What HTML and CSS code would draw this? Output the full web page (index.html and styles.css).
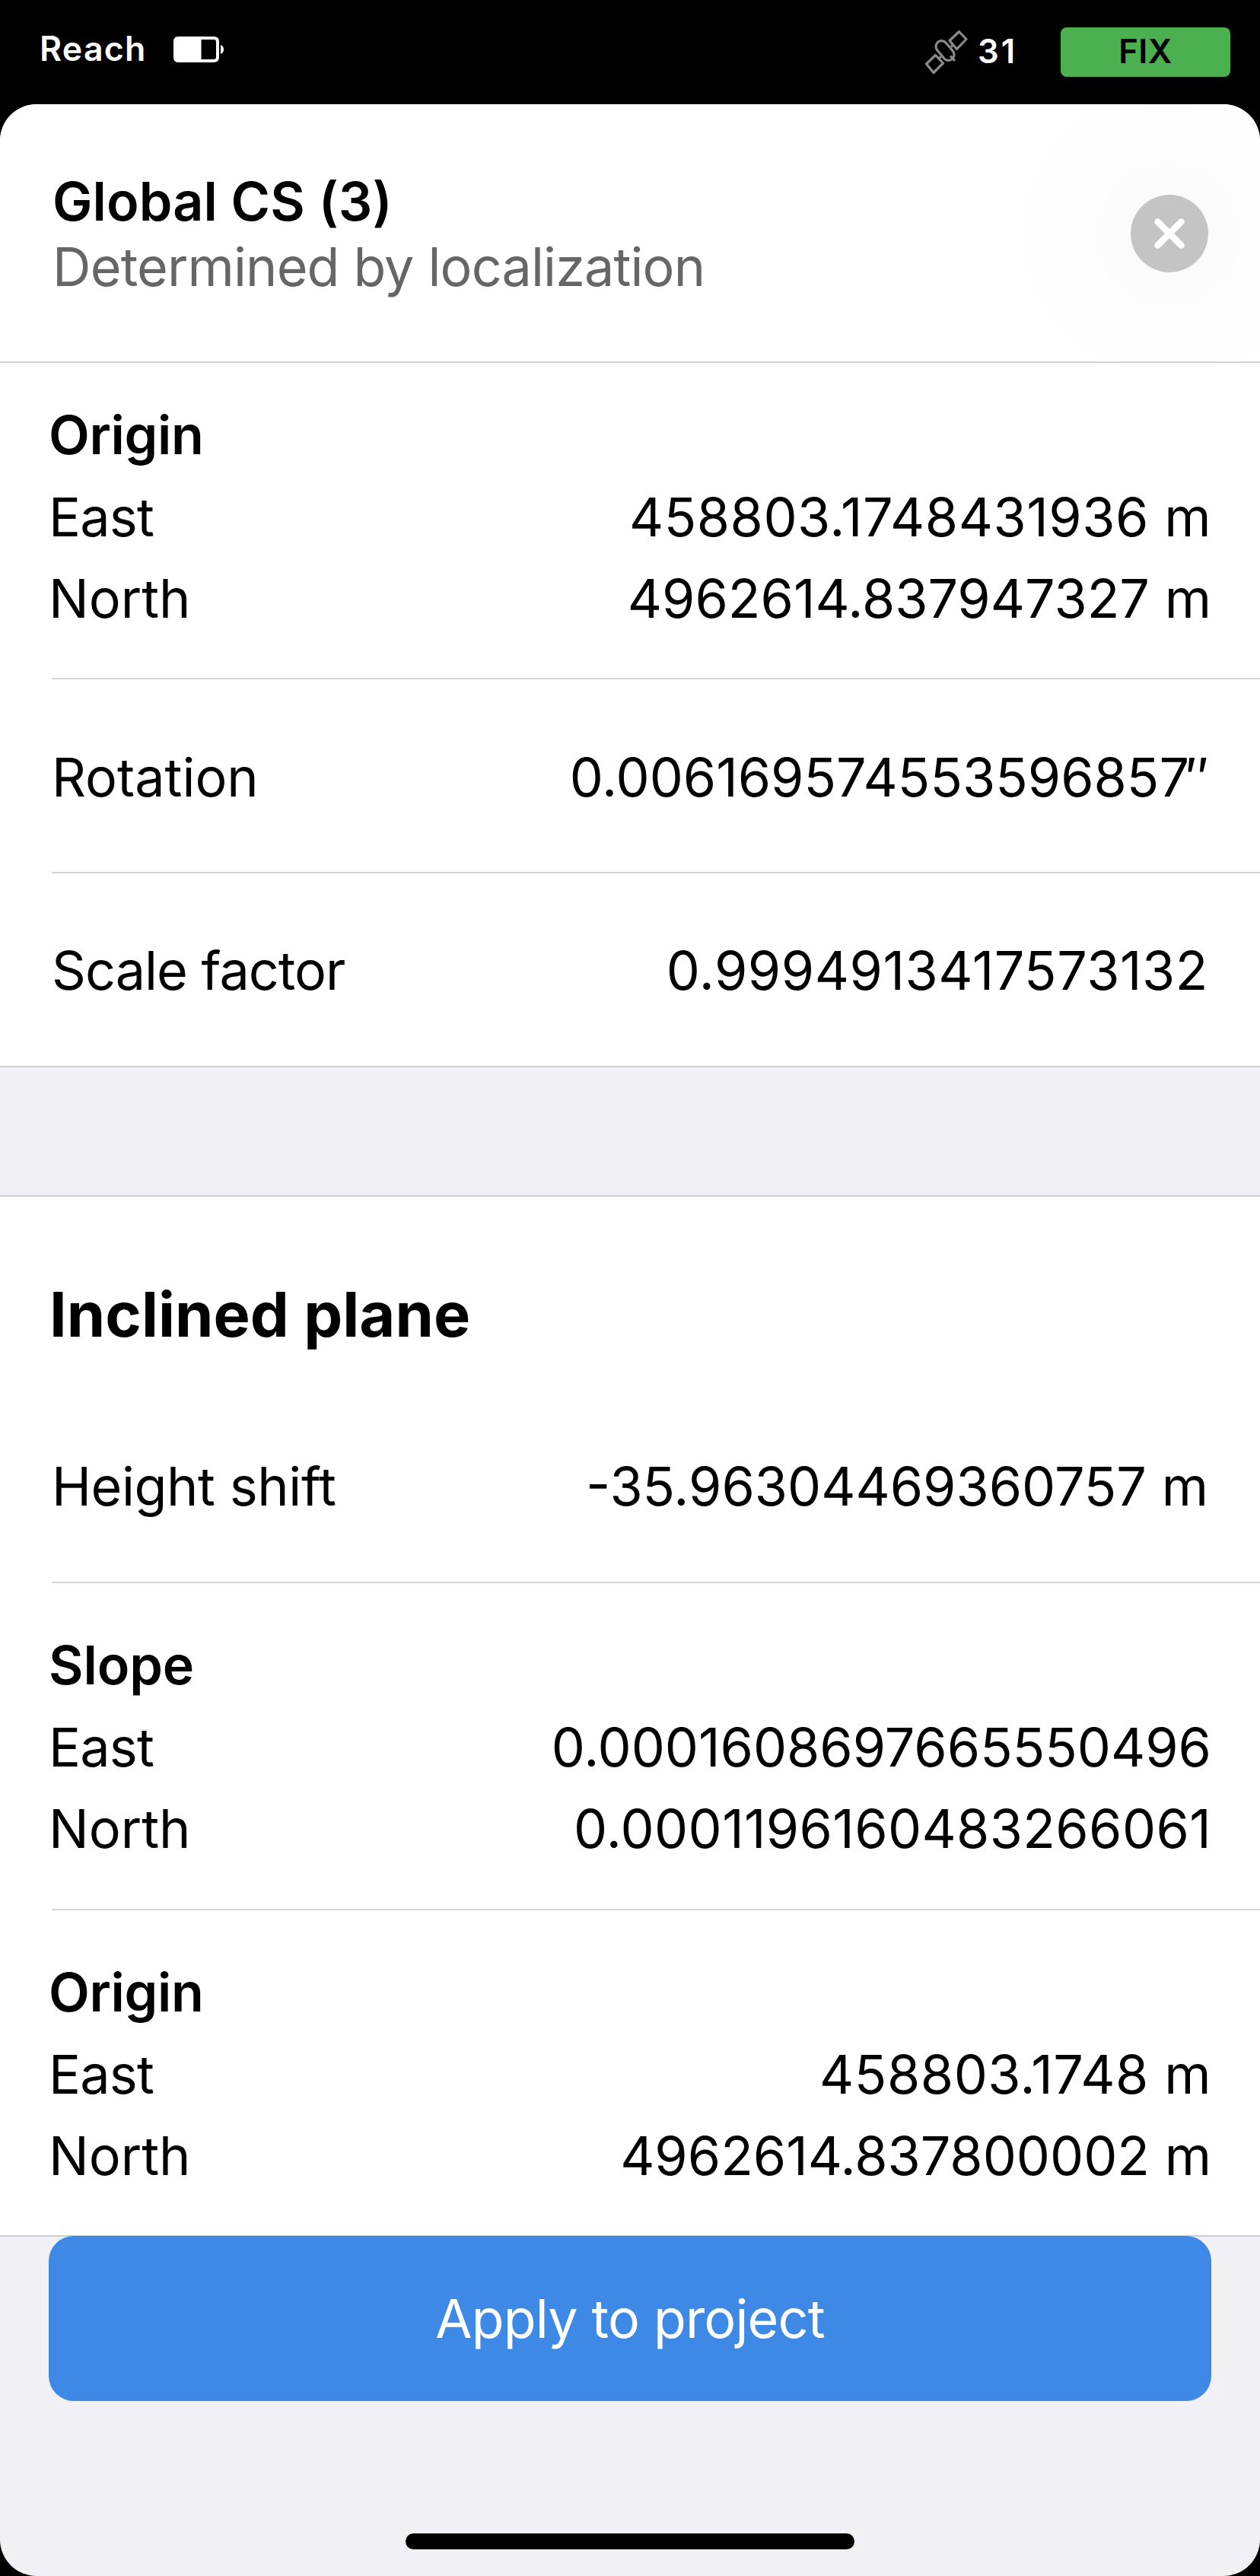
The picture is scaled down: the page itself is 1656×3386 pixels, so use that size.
FILE: index.html
```
<!DOCTYPE html>
<html lang="en">
<head>
<meta charset="utf-8">
<title>Global CS (3)</title>
<link rel="stylesheet" href="styles.css">
</head>
<body>
<div class="screen">
  <header class="status">
    <span class="device">Reach</span>
    <svg class="battery" width="68" height="36" viewBox="0 0 68 36">
      <path fill="#fff" fill-rule="evenodd" d="M7 1H54Q61 1 61 8V28Q61 35 54 35H7Q1 35 1 28V8Q1 1 7 1ZM37.500 5V31H54Q57 31 57 28V8Q57 5 54 5Z"/>
      <path fill="#fff" d="M63 12Q67 13.500 67 18Q67 22.500 63 24Z"/>
    </svg>
    <svg class="satellite" width="60" height="60" viewBox="0 0 60 60" fill="none" stroke="#8a8a8a" stroke-width="3.200" stroke-linejoin="round">
      <path d="M46.500 3.500 56 13.500 43.500 26.500 34 15.500Z"/>
      <path d="M15.500 34.500 25.500 45 13 57.500 3.500 46Z"/>
      <rect x="20.500" y="14" width="15" height="29" rx="7.500" transform="rotate(-40 28 28.500)"/>
      <path d="M36 23.500 38.500 21M20 39 22.500 36.500M35 35.500 41 42"/>
    </svg>
    <span class="count">31</span>
    <span class="badge">FIX</span>
  </header>

  <main class="sheet">
    <div class="head">
      <div>
        <h1 class="title">Global CS (3)</h1>
        <p class="subtitle">Determined by localization</p>
      </div>
      <button class="close" aria-label="Close">
        <svg width="102" height="102" viewBox="0 0 102 102"><path d="M35.500 35.500 66.500 66.500M66.500 35.500 35.500 66.500" stroke="#fff" stroke-width="8.500" stroke-linecap="round"/></svg>
      </button>
    </div>

    <section class="card">
      <div class="group group-first">
        <h3 class="row heading">Origin</h3>
        <div class="row"><span class="east">East</span><span class="wide">458803.1748431936 m</span></div>
        <div class="row"><span>North</span><span>4962614.837947327 m</span></div>
      </div>
      <div class="single"><span>Rotation</span><span>0.006169574553596857<span class="seconds">″</span></span></div>
      <div class="single last"><span class="scale">Scale factor</span><span class="wide">0.9994913417573132</span></div>
    </section>

    <section class="card second">
      <h2 class="section-title">Inclined plane</h2>
      <div class="single height"><span class="tight">Height shift</span><span>-35.96304469360757 m</span></div>
      <div class="group">
        <h3 class="row heading slope">Slope</h3>
        <div class="row"><span class="east">East</span><span>0.0001608697665550496</span></div>
        <div class="row"><span>North</span><span class="loose">0.0001196160483266061</span></div>
      </div>
      <div class="group last">
        <h3 class="row heading">Origin</h3>
        <div class="row"><span class="east">East</span><span class="wide">458803.1748 m</span></div>
        <div class="row"><span>North</span><span>4962614.837800002 m</span></div>
      </div>
    </section>

    <footer class="foot">
      <button class="apply">Apply to project</button>
      <div class="home"></div>
    </footer>
  </main>
</div>
</body>
</html>
```
FILE: styles.css
```
* {
  box-sizing: border-box;
  margin: 0;
  padding: 0;
}

body {
  background: #000;
  color: #000;
  font-family: Inter, "Liberation Sans", sans-serif;
  font-size: 70px;
}

button {
  border: 0;
  font: inherit;
}

.screen {
  width: 1656px;
  height: 3386px;
  display: flex;
  flex-direction: column;
  overflow: hidden;
}

/* Status bar */
.status {
  height: 137px;
  flex: none;
  display: flex;
  align-items: flex-start;
  padding: 36px 39px 0 52px;
  color: #fff;
  font-weight: 600;
}

.status > * {
  flex: none;
}

.device {
  width: 175px;
  margin-top: -4px;
  font-size: 44.6px;
  line-height: 65px;
  letter-spacing: 1.3px;
}

.battery {
  margin-top: 11px;
}

.satellite {
  margin: 2px 0 0 919px;
}

.count {
  width: 109px;
  margin-left: 11px;
  margin-top: -1px;
  font-size: 43.5px;
  line-height: 65px;
  letter-spacing: 3px;
  white-space: nowrap;
}

.badge {
  width: 223px;
  height: 65px;
  margin-left: auto;
  border-radius: 8px;
  background: #4caf50;
  color: #000;
  font-size: 43.5px;
  line-height: 63px;
  letter-spacing: 0.6px;
  text-align: center;
}

/* Sheet */
.sheet {
  flex: 1;
  display: flex;
  flex-direction: column;
  border-radius: 48px;
  background: #f1f0f5;
  overflow: hidden;
}

.head {
  height: 340px;
  flex: none;
  display: flex;
  justify-content: space-between;
  padding: 85px 68px 0 69px;
  border-bottom: 2px solid #d4d4d4;
  background: radial-gradient(circle at 1537px 170px, #fbfbfb 50px, #fefefe 180px, #fff 210px);
}

.title,
.subtitle {
  font-size: 70px;
  line-height: 86px;
}

.title {
  font-weight: 600;
  letter-spacing: 0.1px;
}

.subtitle {
  color: #666;
  letter-spacing: -0.85px;
}

.close {
  width: 102px;
  height: 102px;
  margin-top: 34px;
  border-radius: 50%;
  background: #c4c4c4;
}

.close svg {
  display: block;
}

.card {
  flex: none;
  background: #fff;
  border-bottom: 2px solid #cfcfd2;
}

.second {
  margin-top: 168px;
  border-top: 2px solid #cfcfd2;
}

.group {
  height: 430px;
  padding: 54px 64px 0 64px;
}

.group-first {
  height: 416px;
  padding-top: 41px;
}

.row,
.single {
  display: flex;
  justify-content: space-between;
  line-height: 107.5px;
  white-space: nowrap;
}

.single {
  height: 255px;
  align-items: center;
  padding: 3px 68px 0 68px;
}

/* Inset separators start at the label edge and run to the screen edge. */
.group:not(.last),
.single:not(.last) {
  background: linear-gradient(#d4d4d4, #d4d4d4) 68px 100% / 100% 2px no-repeat;
}

.single.last {
  height: 253px;
}

.group.last {
  height: 427px;
}

.heading {
  font-size: 70px;
  font-weight: 600;
  letter-spacing: -0.34px;
}

.slope {
  letter-spacing: -0.09px;
}

.east {
  letter-spacing: -0.78px;
}

.scale {
  letter-spacing: -0.96px;
}

.wide {
  letter-spacing: 0.54px;
}

.loose {
  letter-spacing: 0.36px;
}

.tight {
  letter-spacing: -0.41px;
}

.seconds {
  margin-left: -5px;
  letter-spacing: -1px;
}

.section-title {
  padding: 98px 65px 0;
  font-size: 81px;
  font-weight: 700;
  line-height: 114px;
  letter-spacing: 0.06px;
}

.single.height {
  height: 296px;
  padding-top: 41px;
}

/* Footer */
.foot {
  flex: 1;
  display: flex;
  flex-direction: column;
  align-items: center;
  justify-content: space-between;
  padding-bottom: 35px;
}

.apply {
  width: 1528px;
  height: 217px;
  margin-top: -1px;
  border-radius: 33px;
  background: #3d89e5;
  color: #fff;
  line-height: 217px;
  letter-spacing: -0.83px;
}

.home {
  width: 590px;
  height: 21px;
  border-radius: 11px;
  background: #000;
}
```
